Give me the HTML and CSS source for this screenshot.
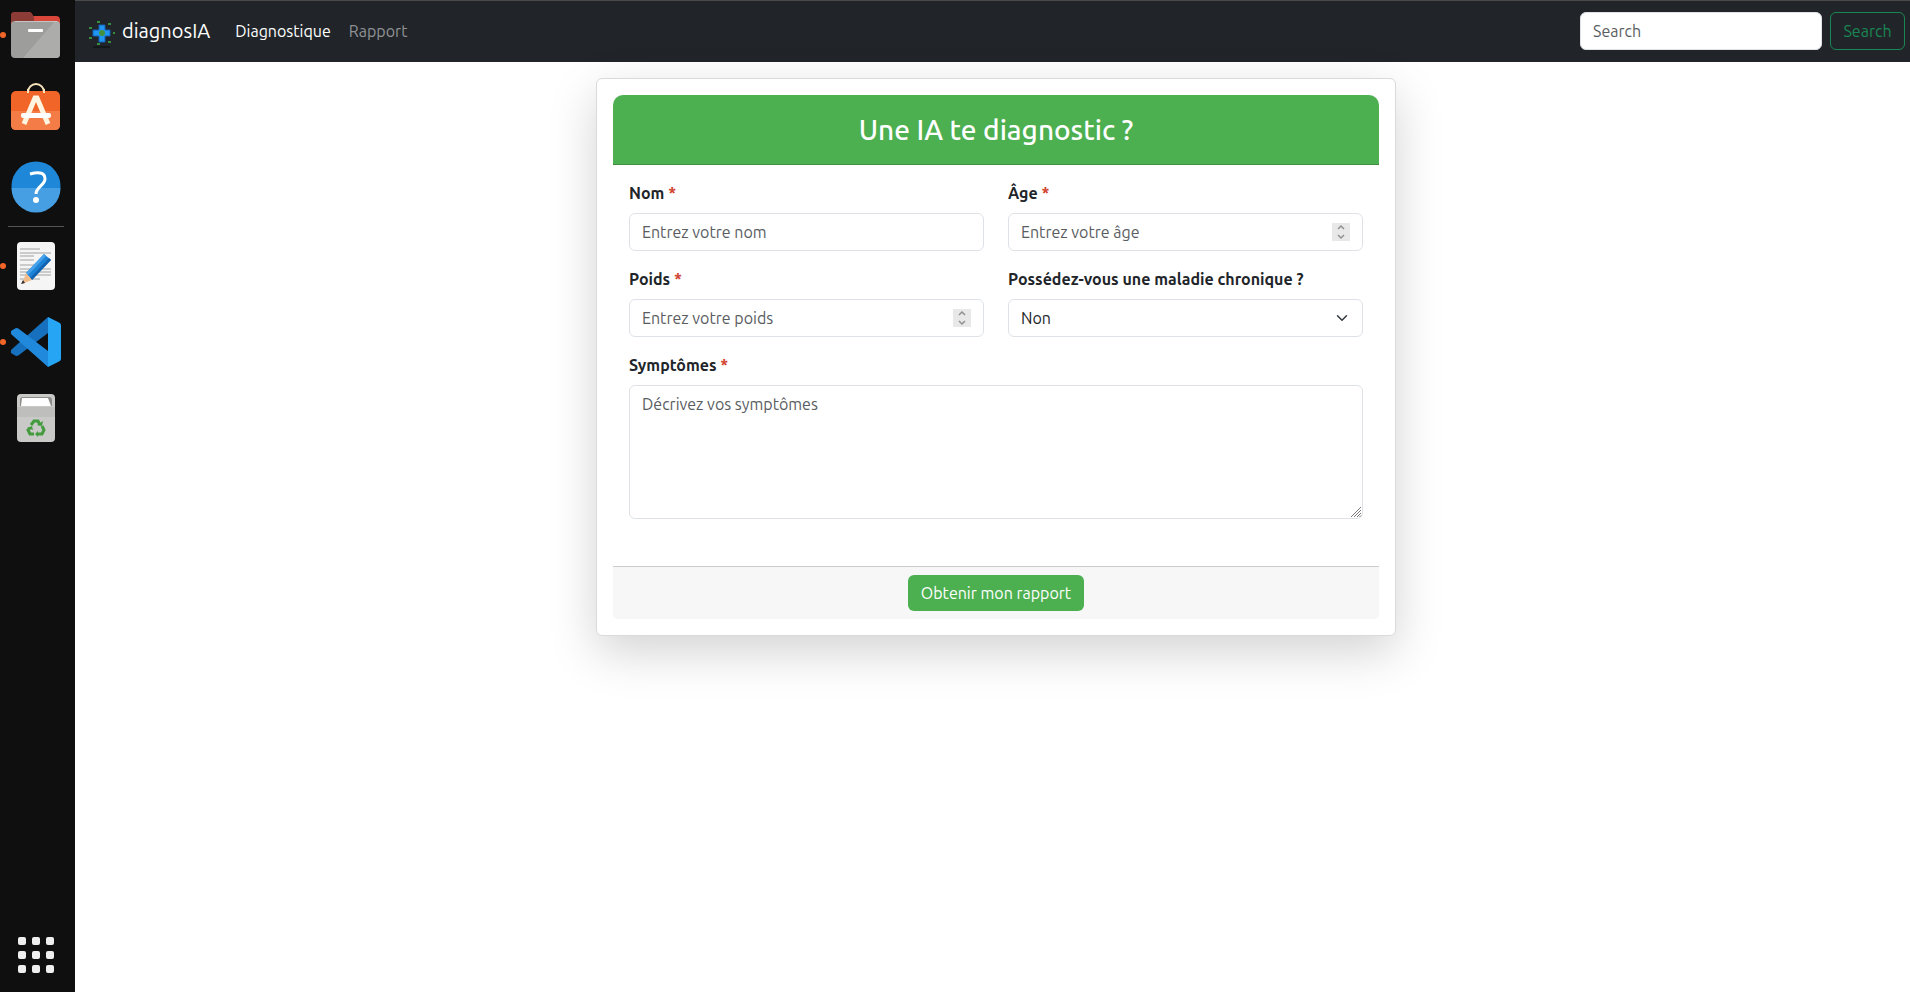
FILE: index.html
```html
<!DOCTYPE html>
<html lang="fr">
<head>
<meta charset="utf-8">
<meta name="viewport" content="width=device-width, initial-scale=1">
<title>diagnosIA</title>
<link rel="stylesheet" href="styles.css">
</head>
<body>
<aside class="dock" aria-label="Dock">
  <button class="dock-item running" type="button" aria-label="Fichiers">
    <svg viewBox="0 0 50 50">
      <path d="M0 6q0-4 4-4h14q2 0 3 2l1 2h23q4 0 4 4v12H0z" fill="#d8473a"/>
      <path d="M0 6q0-4 4-4h14q2 0 3 2l2 3v5H0z" fill="#8c3b36"/>
      <rect x="0" y="11" width="49" height="37" rx="4" fill="#9d9d9b"/>
      <path d="M49 15v29q0 4-4 4H12L44 11q5 0 5 4z" fill="#acacaa"/>
      <path d="M4 11.500h42" stroke="#c4c4c2"/>
      <rect x="17" y="19" width="15" height="3" rx="1" fill="#fff"/>
    </svg>
  </button>
  <button class="dock-item" type="button" aria-label="Logiciels">
    <svg viewBox="0 0 50 50">
      <path d="M17 7a8 8 0 0 1 16 0" fill="none" stroke="#f8e3bb" stroke-width="2" transform="translate(0 -1)"/>
      <rect x="0" y="5" width="49" height="39" rx="5" fill="#f26529"/>
      <path d="M0 25h49v14q0 5-5 5H5q-5 0-5-5z" fill="#f47c46"/>
      <path d="M17 3v4M33 3v4" stroke="#f8e3bb" stroke-width="2"/>
      <path d="M13 38l11-26h2l11 26" fill="none" stroke="#fff4df" stroke-width="5"/>
      <rect x="10" y="27" width="30" height="5" rx="2" fill="#fff"/>
    </svg>
  </button>
  <button class="dock-item" type="button" aria-label="Aide">
    <svg viewBox="0 1 50 50">
      <circle cx="25" cy="25" r="24.500" fill="#1f87d8"/>
      <path d="M.5 27a24.500 24.500 0 0 0 49 0z" fill="#459fe2"/>
      <path d="M19 13q15-4 15 5c0 6-9 8-9 15" fill="none" stroke="#fff" stroke-width="3"/>
      <circle cx="25" cy="39" r="3" fill="#fff"/>
    </svg>
  </button>
  <hr class="dock-sep">
  <button class="dock-item running" type="button" aria-label="Éditeur de texte">
    <svg viewBox="0 0 50 50">
      <rect x="6" y="1" width="38" height="48" rx="4" fill="#f5f5f5"/>
      <path d="M9 8h20M9 12h31M9 15h14M9 19h14M9 24h20M9 28h31M9 31h31M9 34h31M9 38h20" stroke="#bdbdbd" stroke-width="1.500"/>
      <path d="M33 13l7 6-19 20-6-7z" fill="#1e84d8"/>
      <path d="M33 13l2 2-18 19-2-2z" fill="#4aa3ea"/>
      <path d="M38 17l2 2-19 20-2-2z" fill="#1264b0"/>
      <path d="M15 32l6 7-10 4z" fill="#f2bd8c"/>
      <path d="M12 39l2 3-4 1z" fill="#333"/>
    </svg>
  </button>
  <button class="dock-item running" type="button" aria-label="Visual Studio Code">
    <svg viewBox="0 0 50 50">
      <path d="M37 0L0 33v3l5 3q2 0 3-1l29-22z" fill="#1670bd"/>
      <path d="M37 50L0 17v-3l5-3q2 0 3 1l29 22z" fill="#2089dc"/>
      <path d="M37 0l10 5q3 1 3 3v34q0 2-3 3l-10 5z" fill="#26a5f5"/>
    </svg>
  </button>
  <button class="dock-item" type="button" aria-label="Corbeille">
    <svg viewBox="0 0 50 50">
      <rect x="6" y="1" width="38" height="48" rx="4" fill="#c9cac8"/>
      <path d="M6 14h38v10H6z" fill="#bebfbd"/>
      <path d="M9 13V7q0-3 3-3h26q3 0 3 3v6z" fill="#8d8d8b"/>
      <path d="M10 13l1-8h26l3 8z" fill="#fff"/>
      <g fill="none" stroke="#439b3d" stroke-width="3">
        <path d="M20 32l3-4h4l2 4"/><path d="M31 33l2 4-2 4h-4"/><path d="M23 41h-4l-2-4 2-2"/>
      </g>
      <path d="M26 32l5 1 1-5zM27 38v6l-3-3zM16 35l5-2 1 4z" fill="#439b3d"/>
    </svg>
  </button>
  <button class="dock-item dock-apps" type="button" aria-label="Applications">
    <svg viewBox="0 0 50 50" fill="#efefef">
      <rect x="7" y="7" width="8" height="8" rx="2"/><rect x="21" y="7" width="8" height="8" rx="2"/><rect x="35" y="7" width="8" height="8" rx="2"/>
      <rect x="7" y="21" width="8" height="8" rx="2"/><rect x="21" y="21" width="8" height="8" rx="2"/><rect x="35" y="21" width="8" height="8" rx="2"/>
      <rect x="7" y="35" width="8" height="8" rx="2"/><rect x="21" y="35" width="8" height="8" rx="2"/><rect x="35" y="35" width="8" height="8" rx="2"/>
    </svg>
  </button>
</aside>
<div class="page">
  <nav class="navbar">
    <a class="brand" href="#">
      <svg class="brand-logo" viewBox="0 -8 26 36">
        <path d="M10 4h6v5h5v6h-5v6h-6v-6H4V9h6z" fill="#2196f3" stroke="#1263b5"/>
        <circle cx="13" cy="12" r="3" fill="#43923f"/>
        <path d="M8 0h3v2H8zM19 2h3v2h-3zM0 6h3v2H0zM24 11h2v2h-2zM0 16h3v2H0zM19 20h3v2h-3zM8 22h3v2H8z" fill="#388e3c"/>
        <path d="M4 26h17" stroke="#0b0d0f"/>
      </svg>
      <span>diagnosIA</span>
    </a>
    <a class="nav-link active" href="#">Diagnostique</a>
    <a class="nav-link" href="#">Rapport</a>
    <form class="search" role="search">
      <input class="control search-input" type="search" placeholder="Search" aria-label="Search">
      <button class="search-btn" type="button">Search</button>
    </form>
  </nav>
  <main class="content">
    <form class="card">
      <h1 class="card-header">Une IA te diagnostic ?</h1>
      <div class="card-body">
        <div class="field">
          <label for="nom">Nom <span class="req">*</span></label>
          <input class="control" id="nom" type="text" placeholder="Entrez votre nom">
        </div>
        <div class="field">
          <label for="age">Âge <span class="req">*</span></label>
          <input class="control" id="age" type="number" placeholder="Entrez votre âge">
        </div>
        <div class="field">
          <label for="poids">Poids <span class="req">*</span></label>
          <input class="control" id="poids" type="number" placeholder="Entrez votre poids">
        </div>
        <div class="field">
          <label for="maladie">Possédez-vous une maladie chronique ?</label>
          <select class="control select" id="maladie"><option>Non</option><option>Oui</option></select>
        </div>
        <div class="field wide">
          <label for="symptomes">Symptômes <span class="req">*</span></label>
          <textarea class="control" id="symptomes" rows="5" placeholder="Décrivez vos symptômes"></textarea>
        </div>
      </div>
      <div class="card-footer"><button class="submit" type="button">Obtenir mon rapport</button></div>
    </form>
  </main>
</div>
</body>
</html>
```
FILE: styles.css
```css
*, *::before, *::after { box-sizing: border-box; }

body {
  margin: 0;
  min-height: 100vh;
  display: flex;
  background: #fff;
  color: #212529;
  font: 16px/24px Ubuntu, "Noto Sans", sans-serif;
}

button, input, select, textarea { font: inherit; margin: 0; }
a { text-decoration: none; }

/* Dock */
.dock {
  flex: 0 0 75px;
  display: flex;
  flex-direction: column;
  align-items: center;
  gap: 26px;
  padding: 10px 3px 12px 0;
  background: #0f0f0f;
}
.dock-item {
  position: relative;
  width: 50px;
  height: 50px;
  padding: 0;
  border: 0;
  background: none;
}
.dock-item svg { display: block; width: 50px; height: 50px; overflow: visible; }
.dock-item.running::before {
  content: "";
  position: absolute;
  left: -11px;
  top: 22px;
  width: 6px;
  height: 6px;
  border-radius: 50%;
  background: #f26529;
}
.dock-sep { width: 56px; height: 1px; margin: -12px 0; border: 0; background: #555; }
.dock-apps { margin-top: auto; }

/* Navbar */
.page { flex: 1; min-width: 0; display: flex; flex-direction: column; }
.navbar {
  display: flex;
  align-items: center;
  padding: 11px 5px 12px 14px;
  border-top: 1px solid #4a4a4a;
  background: #212529;
}
.brand {
  display: flex;
  align-items: center;
  gap: 7px;
  margin-right: 16px;
  color: #fff;
  font-size: 20px;
}
.brand-logo { width: 26px; height: 36px; }
.nav-link { padding: 0 9px; color: #909295; }
.nav-link.active { color: #fff; }
.search { display: flex; gap: 8px; margin-left: auto; }
.search-btn {
  min-width: 75px;
  padding: 6px 12px;
  border: 1px solid #198754;
  border-radius: 6px;
  background: none;
  color: #198754;
}

/* Form controls */
.control {
  display: block;
  width: 100%;
  padding: 6px 12px;
  border: 1px solid #dee2e6;
  border-radius: 6px;
  background-color: #fff;
  color: #212529;
  line-height: 24px;
  appearance: none;
}
input.control, .select { height: 38px; }
.control::placeholder { color: #595d62; opacity: 1; }
.search .search-input { width: 242px; }
.control::-webkit-inner-spin-button {
  appearance: none;
  width: 18px;
  height: 18px;
  opacity: 1;
  background: #e8e8e8 url("data:image/svg+xml,%3Csvg xmlns='http://www.w3.org/2000/svg' viewBox='0 0 18 18'%3E%3Cpath d='M6 6l3-3 3 3M6 12l3 3 3-3' fill='none' stroke='%23909090' stroke-width='1.500'/%3E%3C/svg%3E") center / 18px no-repeat;
}
.control::-webkit-resizer {
  background: url("data:image/svg+xml,%3Csvg xmlns='http://www.w3.org/2000/svg' viewBox='0 0 15 15'%3E%3Cpath d='M4 14L14 4M7 14l7-7M10 14l4-4M12.500 14l1.500-1.500' stroke='%23777' fill='none'/%3E%3C/svg%3E") right bottom / 15px no-repeat;
}
.select {
  background-image: url("data:image/svg+xml,%3Csvg xmlns='http://www.w3.org/2000/svg' viewBox='0 0 16 16'%3E%3Cpath fill='none' stroke='%23343a40' stroke-linecap='round' stroke-linejoin='round' stroke-width='2' d='m2 5 6 6 6-6'/%3E%3C/svg%3E");
  background-repeat: no-repeat;
  background-position: right 12px center;
  background-size: 16px 12px;
}
textarea.control { resize: vertical; }

/* Card */
.content { padding: 16px 16px 16px 23px; }
.card {
  max-width: 800px;
  margin: 0 auto;
  padding: 16px;
  border: 1px solid #d9dadb;
  border-radius: 6px;
  background: #fff;
  box-shadow: 0 16px 48px rgba(0, 0, 0, .175);
}
.card-header {
  margin: 0;
  padding: 17px 16px;
  border-bottom: 1px solid #3f8f43;
  border-radius: 10px 10px 0 0;
  background: #4caf50;
  color: #fff;
  font-size: 28px;
  font-weight: 500;
  line-height: 35px;
  text-align: center;
}
.card-body {
  display: grid;
  grid-template-columns: 1fr 1fr;
  gap: 16px 24px;
  padding: 16px 16px 47px;
}
.field { display: flex; flex-direction: column; gap: 8px; min-width: 0; }
.field label { font-weight: 700; }
.wide { grid-column: 1 / -1; }
.req { color: #d0402b; }
.card-footer {
  display: flex;
  justify-content: center;
  padding: 8px 16px;
  border-top: 1px solid #cbcccc;
  border-radius: 0 0 5px 5px;
  background: #f7f7f7;
}
.submit {
  min-width: 176px;
  padding: 6px 12px;
  border: 0;
  border-radius: 6px;
  background: #4caf50;
  color: #fff;
}
```
